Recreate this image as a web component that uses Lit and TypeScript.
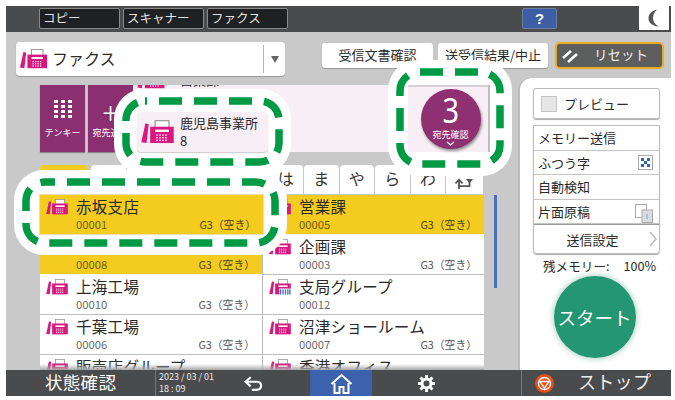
import { LitElement, html, css, svg } from "lit";
import { customElement } from "lit/decorators.js";

const faxIcon = (cls: string, group = false) => html`<svg class="fax ${cls}" viewBox="0 0 27 20">
  <rect x="11.5" y="0.6" width="11.5" height="6" fill="#fff" stroke="#8d8d8d" stroke-width="0.9"/>
  <polygon points="3.4,3 6.2,3.4 4.4,19.2 0,18.6" fill="#d9187f"/>
  <rect x="7.4" y="5.6" width="19.6" height="13.6" fill="#d9187f"/>
  <rect x="11.5" y="8" width="11.5" height="2" fill="#fff"/>
  ${[12, 14.2, 16.4].map((y) =>
    [12.5, 15, 17.5, 20].map((x) => svg`<rect x=${x} y=${y} width="1.2" height="1.2" fill="#fff"/>`))}
  ${group
    ? svg`<rect x="13" y="12" width="14" height="8" fill="#fff"/>${[13.5, 16.5, 19.5, 22.5, 25].map(
        (x) => svg`<rect x=${x} y="13" width="1.6" height="6.4" fill="#3a6fb0"/>`)}`
    : ""}
</svg>`;

interface Entry { name: string; no?: string; g3?: boolean; on?: boolean; group?: boolean; blank?: boolean }

const col1: Entry[] = [
  { name: "", blank: true, on: true },
  { name: "\u00a0", no: "00008", g3: true, on: true },
  { name: "上海工場", no: "00010", g3: true },
  { name: "千葉工場", no: "00006", g3: true },
  { name: "販売店グループ" },
];
const col2: Entry[] = [
  { name: "営業課", no: "00005", g3: true, on: true },
  { name: "企画課", no: "00003", g3: true },
  { name: "支局グループ", no: "00012", group: true },
  { name: "沼津ショールーム", no: "00007", g3: true },
  { name: "香港オフィス" },
];

const rowTpl = (e: Entry) => e.blank
  ? html`<div class="row on"></div>`
  : html`<div class="row ${e.on ? "on" : ""}">
      ${faxIcon("f-row", e.group)}
      <span class="name">${e.name}</span>
      <span class="no">${e.no ?? ""}</span>
      <span class="g3">${e.g3 ? "G3（空き）" : ""}</span>
    </div>`;

const ring = (w: number, h: number, off: number) => html`<svg class="ring" viewBox="0 0 ${w} ${h}">
  <rect x="12" y="12" width=${w - 24} height=${h - 24} rx="19" fill="none" stroke="#009944" stroke-width="7.5"
    stroke-dasharray="23 12" stroke-dashoffset=${off}/>
</svg>`;

@customElement("app-root")
export class AppRoot extends LitElement {
  static styles = css`
    :host { display: block; width: 675px; height: 400px; background: #fff; overflow: hidden;
      font-family: "Noto Sans CJK JP", "Noto Sans", sans-serif; color: #2a2a2a; }
    .screen { box-sizing: border-box; margin: 6px 0 0 6px; width: 665px; height: 390px; display: flex; flex-direction: column; }
    .top { height: 26px; background: #4a4b4d; display: flex; align-items: flex-start; padding: 2px 0 0 33px; gap: 3px; box-sizing: border-box; flex: none; position: relative; }
    .apptab { box-sizing: border-box; width: 81px; height: 21px; background: #1f2021; border: 1px solid #8a8a8a; border-radius: 2px; color: #e4e4e4; font-size: 12.5px; line-height: 18px; padding-left: 3px; }
    .help { box-sizing: border-box; margin-left: 231px; width: 35px; height: 21px; background: #3b5ea6; border: 1px solid #6d7f9f; border-radius: 2px; color: #fff; font: bold 15px/19px "Liberation Sans", sans-serif; text-align: center; }
    .moon { margin: -2px 2px 0 auto; width: 30px; height: 24px; background: #fff; display: flex; align-items: center; justify-content: center; }
    .moon svg { width: 12px; height: 18px; }
    .main { flex: 1; background: #c9c9c9; display: flex; flex-direction: column; position: relative; min-height: 0; }
    .head { height: 46px; box-sizing: border-box; padding: 10px 6px 0 10px; display: flex; align-items: flex-start; flex: none; }
    .select { box-sizing: border-box; width: 269px; height: 34px; background: #fff; border-radius: 4px; box-shadow: 0 1px 1px #999; display: flex; align-items: center; padding-left: 4px; }
    .f-mode { width: 27px; height: 20px; }
    .select .lbl { font-size: 16px; line-height: 22px; margin: -3px 0 0 5px; flex: 1; }
    .select .arrow { width: 21px; height: 28px; border-left: 1px solid #b5b5b5; display: flex; align-items: center; justify-content: center; }
    .select .tri { width: 0; height: 0; border: 4.5px solid transparent; border-top: 7px solid #666; border-bottom: 0; }
    .btn { box-sizing: border-box; height: 25px; background: #fff; border-radius: 3px; box-shadow: 0 1px 1px #999; font-size: 13px; line-height: 23px; text-align: center; margin-top: 1px; white-space: nowrap; }
    .b1 { margin-left: 37px; width: 111px; }
    .b2 { margin-left: 5px; width: 110px; }
    .reset { box-sizing: border-box; margin-left: 7px; width: 109px; height: 27px; background: #5d5e5e; border: 2px solid #eaa91e; border-radius: 5px; color: #fff; font-size: 13.5px; display: flex; align-items: center; padding-left: 5px; }
    .reset svg { width: 18px; height: 14px; }
    .reset span { margin: -3px 0 0 14px; color: #eee; }
    .body { flex: 1; display: flex; min-height: 0; }
    .left { width: 514px; box-sizing: border-box; padding: 7px 0 0 34px; flex: none; }
    .dest { height: 67px; width: 448px; display: flex; }
    .pbtn { box-sizing: border-box; width: 45px; margin-right: 3px; background: #8c2f71; color: #fff; display: flex; flex-direction: column; align-items: center; font-size: 9px; box-shadow: 0 1px 1px #888; flex: none; }
    .pbtn:nth-child(2) { margin-right: 0; }
    .keys { display: grid; grid-template-columns: repeat(3, 4px); grid-auto-rows: 3px; gap: 2px 3px; margin: 15px 0 6px; height: 20px; }
    .keys i { background: #fff; }
    .plus { font-size: 30px; line-height: 26px; font-weight: 300; margin: 13px 0 1px; height: 27px; }
    .pbtn span { white-space: nowrap; }
    .peek { flex: 1; background: #f8eef6; overflow: hidden; display: flex; position: relative; }
    .peek .txt { font-size: 13px; margin: -15px 0 0 15px; height: 19px; line-height: 19px; }
    .peek .f-peek { width: 28px; height: 20px; margin: -16px 0 0 4px; }
    .pend { width: 82px; box-sizing: border-box; background: #f8eef6; box-shadow: inset -2px 0 0 #bdbdbd, inset 0 2px 0 #d4d0d3; height: 67px; display: flex; align-items: center; justify-content: center; }
    .count { width: 60px; height: 60px; border-radius: 50%; background: #8e3072; color: #fff; box-shadow: 1px 2px 3px #8b8b8b; display: flex; flex-direction: column; align-items: center; margin-left: 3px; }
    .count b { font-family: "Noto Sans", sans-serif; font-size: 34px; font-weight: 400; line-height: 36px; margin-top: 3px; height: 37px; transform: scaleX(0.85); }
    .count span { font-size: 9px; line-height: 11px; white-space: nowrap; }
    .count svg { width: 9px; height: 5px; margin-top: 1px; }
    .tabs { display: flex; gap: 1px; margin-top: 13px; height: 29px; width: 444px; }
    .tab { box-sizing: border-box; width: 34.5px; background: #fff; border-radius: 4px 4px 0 0; text-align: center; font-size: 16px; line-height: 24px; padding-bottom: 3px; color: #333; display: flex; align-items: center; justify-content: center; }
    .tab.first { width: 48px; margin-right: 2px; background: #f4cb1f; }
    .tab.last { width: 37px; padding: 7px 3px 0 0; }
    .tab svg { width: 19px; height: 11px; }
    .lower { display: flex; height: 175px; margin-top: 1px; }
    .list { width: 444px; height: 175px; overflow: hidden; display: grid; grid-template-columns: 223px 221px; position: relative; background: #fff; }
    .list::after { content: ""; position: absolute; left: 0; right: 0; bottom: 0; height: 6px; background: linear-gradient(transparent, #a9a9a9); }
    .col1 { border-right: 1px solid #bbb; }
    .row { box-sizing: border-box; height: 40px; display: grid; grid-template-columns: 30px 1fr auto; grid-template-rows: 21px 14px; align-content: start; padding: 1px 12px 0 6px; border-bottom: 1px solid #bdbdbd; background: #fff; }
    .row.on { background: #f4cb1f; border-bottom-color: #fff; }
    .f-row { width: 22px; height: 16px; margin-top: 3px; grid-row: 1 / 2; }
    .name { grid-column: 2 / 4; font-size: 15.5px; line-height: 21px; letter-spacing: 0.3px; white-space: nowrap; }
    .no { font-size: 11.3px; line-height: 14px; color: #6a6a6a; grid-column: 2; }
    .row.on .no { color: #6d5d14; }
    .g3 { font-size: 10.8px; line-height: 14px; color: #555; grid-column: 3; margin-right: -5px; white-space: nowrap; }
    .row.on .g3 { color: #4a4212; }
    .bar { width: 2.5px; height: 93px; background: #4f6fb5; margin-left: 10px; }
    .panel { flex: 1; background: #fff; border-radius: 12px 0 0 0; box-shadow: -2px 0 0 #bbb; box-sizing: border-box; padding: 10px 11px 0 13px; display: flex; flex-direction: column; }
    .prev { box-sizing: border-box; height: 31px; border: 1px solid #bcbcbc; border-radius: 3px; box-shadow: 0 1px 1px #aaa; display: flex; align-items: center; padding-left: 7px; font-size: 13px; line-height: 24px; flex: none; }
    .prev i { width: 14px; height: 14px; background: #e6e6e6; border: 1px solid #c4c4c4; margin-right: 7px; }
    .opts { margin-top: 6px; border: 1px solid #bcbcbc; border-radius: 0 0 4px 4px; box-shadow: 0 1px 1px #aaa; flex: none; }
    .opt { height: 24.5px; border-bottom: 1px solid #c4c4c4; box-sizing: border-box; display: flex; align-items: center; justify-content: space-between; padding: 0 6px 0 4px; font-size: 13px; white-space: nowrap; }
    .opt.send { height: 29px; justify-content: center; position: relative; border-bottom: 0; border-top: 1px solid #9a9a9a; padding-right: 12px; }
    .opt.send svg { position: absolute; right: 2px; top: 6px; width: 8px; height: 16px; }
    .opt svg.ic1 { width: 15px; height: 15px; }
    .opt svg.ic2 { width: 18px; height: 19px; margin: 4px 0 0 0; }
    .mem { font-size: 12.6px; display: flex; justify-content: space-between; margin-top: 3px; padding: 0 4px 0 10px; line-height: 18px; white-space: nowrap; }
    .startw { display: flex; justify-content: center; margin-top: 1px; padding-right: 4px; }
    .start { width: 82px; height: 82px; border-radius: 50%; background: #259672; color: #fff; font-size: 18.5px; display: flex; align-items: center; justify-content: center; box-shadow: 0 0 5px 2px #c3ddd3; white-space: nowrap; }
    .bottom { height: 26px; background: #4a4b4d; display: flex; flex: none; color: #fff; position: relative; align-items: center; }
    .state { box-sizing: border-box; width: 150px; padding-left: 39px; font-size: 17.5px; line-height: 24px; letter-spacing: 0.3px; border-right: 1px solid #777; height: 26px; white-space: nowrap; }
    .clock { width: 76px; font-size: 9px; line-height: 12px; padding-left: 3px; box-sizing: border-box; white-space: pre; color: #eee; }
    .back { width: 20px; height: 15px; margin-left: 11px; }
    .home { margin-left: 47px; width: 62px; height: 26px; background: #3d62ad; display: flex; align-items: center; justify-content: center; }
    .home svg { width: 25px; height: 21px; }
    .gear { width: 17px; height: 17px; margin-left: 46px; }
    .stopw { margin-left: 86px; flex: 1; height: 26px; border-left: 1px solid #7a7a7a; box-sizing: border-box; display: flex; align-items: center; padding-left: 13px; }
    .stopw svg { width: 19px; height: 19px; }
    .stopw span { margin: -4px 0 0 24px; font-size: 18px; letter-spacing: 0.3px; white-space: nowrap; color: #eee; }
    .call { position: absolute; background: #fff; }
    .c1 { left: 108px; top: 57px; width: 177px; height: 85px; border-radius: 30px; }
    .c2 { left: 8px; top: 138px; width: 273px; height: 85px; border-radius: 30px; }
    .c3 { left: 382px; top: 28px; width: 124px; height: 116px; border-radius: 30px; }
    .ring { position: absolute; left: 0; top: 0; width: 100%; height: 100%; }
    .card1 { position: absolute; left: 23px; top: 23px; width: 131px; height: 40px; border-radius: 4px; background: #f8eef6; display: flex; align-items: center; box-sizing: border-box; padding-left: 4px; box-shadow: 0 1px 1px #ccc; }
    .f-big { width: 33px; height: 24px; margin-right: 6px; flex: none; }
    .card1 .t { font-size: 13px; line-height: 18px; white-space: nowrap; }
    .c2row { position: absolute; left: 26px; top: 25px; width: 223px; box-shadow: 0 0 0 1px #e8e0b0; }
    .c2row .row { border-bottom: 0; height: 39px; }
    .c3in { position: absolute; left: 20px; top: 25px; width: 82px; height: 67px; }
  `;

  render() {
    return html`<div class="screen">
      <div class="top">
        <div class="apptab">コピー</div><div class="apptab">スキャナー</div><div class="apptab">ファクス</div>
        <div class="help">?</div>
        <div class="moon"><svg viewBox="0 0 12 18"><path d="M9 0.5C3 2 0.5 5.500 0.500 9.500C0.500 13.500 4 17 10.500 17.500C6.500 15 5 12 5 9C5 6 6.500 3 9 0.500Z" fill="#555"/></svg></div>
      </div>
      <div class="main">
        <div class="head">
          <div class="select">${faxIcon("f-mode")}<span class="lbl">ファクス</span><span class="arrow"><i class="tri"></i></span></div>
          <div class="btn b1">受信文書確認</div>
          <div class="btn b2">送受信結果/中止</div>
          <div class="reset"><svg viewBox="0 0 18 14"><path d="M1 9L9 2M6 13L15 5" stroke="#fff" stroke-width="2.6" fill="none"/></svg><span>リセット</span></div>
        </div>
        <div class="body">
          <div class="left">
            <div class="dest">
              <div class="pbtn"><div class="keys">${Array.from({ length: 12 }, () => html`<i></i>`)}</div><span>テンキー</span></div>
              <div class="pbtn"><div class="plus">+</div><span>宛先追加</span></div>
              <div class="peek">${faxIcon("f-peek")}<div class="txt">営業課</div></div>
            </div>
            <div class="tabs">
              <div class="tab first">全</div>
              ${["あ", "か", "さ", "た", "な", "は", "ま", "や", "ら", "わ"].map((t) => html`<div class="tab">${t}</div>`)}
              <div class="tab last"><svg viewBox="0 0 19 11"><path d="M5 11V3M1.500 5.500L5 1.500L8.500 5.500" fill="none" stroke="#555" stroke-width="1.800"/><path d="M5 8.200H15.500V3" fill="none" stroke="#555" stroke-width="1.800"/><path d="M12 1L15.500 5.500L19 1Z" fill="#555"/></svg></div>
            </div>
            <div class="lower">
              <div class="list">
                <div class="col1">${col1.map(rowTpl)}</div>
                <div>${col2.map(rowTpl)}</div>
              </div>
              <div class="bar"></div>
            </div>
          </div>
          <div class="panel">
            <div class="prev"><i></i>プレビュー</div>
            <div class="opts">
              <div class="opt">メモリー送信</div>
              <div class="opt">ふつう字
                <svg class="ic1" viewBox="0 0 15 15"><rect x="0.500" y="0.500" width="14" height="14" fill="#fff" stroke="#aaa"/><path d="M3 3h3v3H3zM9 3h3v3H9zM6 6h3v3H6zM3 9h3v3H3zM9 9h3v3H9z" fill="#2f64b8"/></svg></div>
              <div class="opt">自動検知</div>
              <div class="opt">片面原稿
                <svg class="ic2" viewBox="0 0 18 19"><rect x="0.500" y="0.500" width="11" height="13" fill="#fff" stroke="#aaa"/><rect x="7" y="6" width="10.500" height="12.500" fill="#dcdcdc" stroke="#aaa"/><path d="M12 10v5" stroke="#7fa0d8"/></svg></div>
              <div class="opt send">送信設定<svg viewBox="0 0 8 16"><path d="M1 1L7 8L1 15" fill="none" stroke="#bbb" stroke-width="1.600"/></svg></div>
            </div>
            <div class="mem"><span>残メモリー:</span><span>100%</span></div>
            <div class="startw"><div class="start">スタート</div></div>
          </div>
        </div>

        <div class="call c1">
          ${ring(177, 85, -14)}
          <div class="card1">${faxIcon("f-big")}<div class="t">鹿児島事業所<br />8</div></div>
        </div>
        <div class="call c2">
          ${ring(273, 85, -22)}
          <div class="c2row">${rowTpl({ name: "赤坂支店", no: "00001", g3: true, on: true })}</div>
        </div>
        <div class="call c3">
          ${ring(124, 116, -1)}
          <div class="c3in"><div class="pend"><div class="count"><b>3</b><span>宛先確認</span>
            <svg viewBox="0 0 9 5"><path d="M1 1L4.500 4L8 1" fill="none" stroke="#fff" stroke-width="1.200"/></svg></div></div></div>
        </div>
      </div>
      <div class="bottom">
        <div class="state">状態確認</div>
        <div class="clock">2023 / 03 / 01\n18 : 09</div>
        <svg class="back" viewBox="0 0 16 13"><path d="M6 1L1.500 5L6 9M2 5H11C13.500 5 15 6.500 15 8.500C15 10.500 13.500 12 11 12H7" fill="none" stroke="#fff" stroke-width="1.800"/></svg>
        <div class="home"><svg viewBox="0 0 22 21"><path d="M1 11L11 2L21 11M4 10V20H9V14H13V20H18V10" fill="none" stroke="#fff" stroke-width="2"/></svg></div>
        <svg class="gear" viewBox="0 0 17 17"><circle cx="8.500" cy="8.500" r="4.500" fill="none" stroke="#fff" stroke-width="3"/><path d="M8.500 0v17M0 8.500h17M2.500 2.500l12 12M14.500 2.500l-12 12" stroke="#fff" stroke-width="3" stroke-dasharray="3 11 3"/></svg>
        <div class="stopw"><svg viewBox="0 0 19 19"><circle cx="9.500" cy="9.500" r="9.500" fill="#e2501e"/><circle cx="9.500" cy="9.500" r="6" fill="none" stroke="#fff" stroke-width="1.300"/><path d="M5 7.500H14L9.500 14Z" fill="none" stroke="#fff" stroke-width="1.300"/></svg><span>ストップ</span></div>
      </div>
    </div>`;
  }
}
